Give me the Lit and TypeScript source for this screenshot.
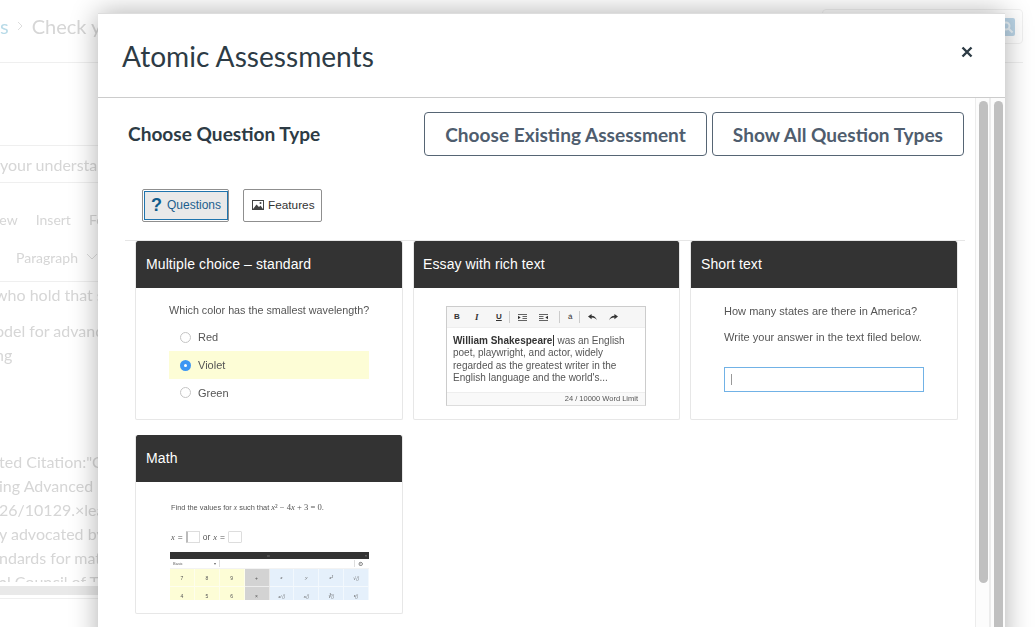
import { LitElement, html, css, svg } from "lit";
import { customElement } from "lit/decorators.js";

const sans = css`"Liberation Sans", Arial, sans-serif`;

const keys = [
  ["7", "y"], ["8", "y"], ["9", "y"], ["+", "g"], ["x", "b"], ["y", "b"], ["x²", "b"], ["√▯", "b"],
  ["4", "y"], ["5", "y"], ["6", "y"], ["×", "g"], ["x/▯", "b"], ["x▯", "b"], ["∛▯", "b"], ["ⁿ▯", "b"],
];

const icon = (d: string) => html`<svg class="tb-icon" viewBox="0 0 10 10" aria-hidden="true">${svg`<path d=${d}></path>`}</svg>`;

@customElement("app-root")
export class AppRoot extends LitElement {
  static styles = css`
    :host { display: block; width: 1036px; height: 627px; font-family: ${sans}; }
    * { box-sizing: border-box; }
    .page { position: relative; width: 1036px; height: 627px; overflow: hidden; background: #fff; }

    /* dimmed page behind the dialog */
    .bg { display: flex; flex-direction: column; width: 1023px; height: 627px; font-family: Lato, sans-serif; color: #d6d6d6; white-space: nowrap; filter: blur(0.4px); }
    .crumbs { flex: none; height: 63px; border-bottom: 1px solid #efefef; display: flex; justify-content: space-between; align-items: flex-start; padding-top: 8px; font-size: 20px; }
    .crumb-text { display: flex; align-items: center; gap: 8.5px; height: 36px; }
    .crumb-link { color: #b9dbe8; }
    .search { width: 201px; height: 35px; margin-top: 1px; border: 1px solid #f1f1f1; border-radius: 4px; display: flex; justify-content: flex-end; align-items: center; padding-right: 7px; }
    .search-btn { width: 16px; height: 18px; background: #bcd6e8; border-radius: 2px; display: flex; align-items: center; justify-content: center; }
    .search-btn svg { width: 14px; height: 14px; fill: none; stroke: #e9f2f7; stroke-width: 2; }
    .bg-col { width: 200px; font-size: 16px; }
    .instr { margin-top: 82px; height: 38px; border-top: 1px solid #efefef; border-bottom: 1px solid #efefef; display: flex; align-items: center; }
    .menu { margin: 18px 0 0 -4px; height: 36px; display: flex; align-items: center; gap: 18px; font-size: 14px; }
    .format { height: 45px; padding: 0 0 4px 16px; border-bottom: 1px solid #efefef; display: flex; align-items: center; gap: 8px; font-size: 14px; }
    .format svg { width: 12px; height: 8px; fill: none; stroke: #ddd; }
    .text { line-height: 24px; }
    .t1 { margin: 1px 0 0 -5px; }
    .t2 { margin: 12px 0 0 -5px; }
    .t3 { margin: 83px 0 0 -1px; height: 132px; overflow: hidden; }
    .hbar { margin-top: 4px; height: 9px; width: 100px; background: #e9e9e9; }
    .hline { margin-top: 3px; height: 1px; background: #efefef; }

    /* dialog */
    .modal { position: absolute; left: 98px; top: 13px; width: 907px; height: 640px; background: #fff; display: flex; flex-direction: column; box-shadow: 0 0 26px rgba(0,0,0,.32); border-top: 1px solid #ddd; }
    .m-head { flex: none; height: 84px; border-bottom: 1px solid #ccc; display: flex; align-items: center; justify-content: space-between; padding: 0 31px 0 24px; }
    h1 { margin: 1px 0 0; font: 400 28.1px Lato, sans-serif; color: #2d3b45; }
    .close { width: 14px; height: 14px; display: block; margin-bottom: 7px; stroke: #2d3b45; stroke-width: 2.4; }
    .m-body { flex: 1; min-height: 0; display: flex; }
    .content { width: 877px; padding: 14px 0 0 27px; }
    .title-row { display: flex; align-items: center; justify-content: space-between; padding-right: 11px; }
    h2 { margin: 0 0 2px 3px; font: 700 19.1px Lato, sans-serif; color: #2d3b45; }
    .btns { display: flex; gap: 5px; }
    .btn { height: 44px; padding: 0 20px; background: #fff; border: 1px solid #566574; border-radius: 4px; font: 700 19.08px Lato, sans-serif; color: #4f5d6e; white-space: nowrap; }
    .tabs { display: flex; gap: 14px; margin: 33px 0 0 17px; }
    .tab { height: 33px; padding: 1px; border: 1px solid #8f8f8f; border-radius: 2px; background: #fff; display: flex; font-size: 12px; color: #333; }
    .tab-in { display: flex; align-items: center; gap: 5px; border: 1px solid transparent; padding: 0 6px 2px; }
    .tab.on .tab-in { border-color: #1f74ad; background: #e9e9e9; color: #1c5f8e; }
    .tab.on { padding: 1px; width: 87px; }
    .tab.feat { width: 79px; font-size: 11.8px; }
    .tab.feat .tab-in { gap: 4px; }
    .q { font-size: 18px; font-weight: 700; color: #0f5c8c; line-height: 1; }
    .pic { width: 12px; height: 10px; }
    .rule { margin-top: 18px; height: 1px; background: #e6e6e6; width: 840px; }
    .cards { display: grid; grid-template-columns: 268px 267px 268px; column-gap: 10px; row-gap: 15px; margin-left: 10px; }
    .card { height: 179px; border: 1px solid #e7e7e7; border-top: 0; border-radius: 2px; overflow: hidden; background: #fff; }
    .c-head { height: 47px; background: #333; color: #fff; font-size: 14px; letter-spacing: .1px; display: flex; align-items: center; padding: 0 0 2px 10px; border-radius: 2px 2px 0 0; }
    .card:nth-child(2) .c-head { padding-left: 9px; }
    .c-body { color: #555; font-size: 11px; filter: blur(.3px); }

    .mc { padding: 16px 33px 0; }
    .mc-q { line-height: 13px; white-space: nowrap; font-size: 10.75px; }
    .opts { margin-top: 6px; display: flex; flex-direction: column; }
    .opt { height: 28px; display: flex; align-items: center; gap: 7px; padding-left: 11px; }
    .opt.sel { background: #fdfdd6; }
    .opt:last-child { height: 27px; }
    .radio { width: 11px; height: 11px; border-radius: 50%; border: 1px solid #c4c4c4; background: #fff; }
    .sel .radio { border: 0; background: #3d96f3; display: flex; align-items: center; justify-content: center; }
    .sel .radio::after { content: ""; width: 3px; height: 3px; border-radius: 50%; background: #fff; }

    .essay { padding: 18px 0 0 32px; }
    .editor { width: 200px; height: 100px; border: 1px solid #ccc; border-bottom-color: #ddd; display: flex; flex-direction: column; color: #555; }
    .tb { height: 21px; background: #f6f6f6; border-bottom: 1px solid #eee; display: flex; align-items: center; padding-left: 7px; }
    .tb-b { width: 21px; font-size: 8px; color: #333; font-weight: 700; line-height: 1; }
    .tb-b.i { font-style: italic; font-family: "Liberation Serif", serif; font-size: 9px; }
    .tb-b.u { text-decoration: underline; width: 16px; }
    .tb-b.a { width: 12px; font-weight: 400; }
    .tb-icon { width: 9px; height: 9px; fill: #333; margin-right: 12px; }
    .tb-sep { width: 1px; height: 12px; background: #ccc; margin: 0 8px 0 -1px; }
    .tb-sep.first { margin: 0 8px 0 -3px; }
    .e-text { flex: 1; padding: 6.5px 6px 0; font-size: 10px; line-height: 12.5px; white-space: nowrap; }
    .e-text b { color: #333; }
    .caret { display: inline-block; width: 1px; height: 11px; background: #333; margin: 0 3px 0 1px; vertical-align: -2px; }
    .e-foot { height: 13px; border-top: 1px solid #eee; background: #f9f9f9; font-size: 7.5px; text-align: right; padding-right: 7px; line-height: 12px; color: #555; }

    .st { padding: 17px 0 0 33px; line-height: 13px; letter-spacing: .03px; }
    .st p { margin: 0 0 13px; }
    .field { margin-top: 23px; width: 200px; height: 25px; border: 1px solid #71b2e6; display: flex; align-items: center; padding-left: 6px; }
    .field span { width: 1px; height: 11px; background: #999; }

    .math { padding: 20px 0 0 35px; color: #555; filter: blur(.45px); }
    .m-q { font-size: 7.4px; line-height: 10px; white-space: nowrap; }
    .m-q i, .m-a i { font-family: "Liberation Serif", serif; }
    .m-eq { font-family: "Liberation Serif", serif; font-size: 8.6px; }
    .m-a { margin-top: 17px; height: 13px; display: flex; align-items: center; gap: 3px; font-size: 8.5px; }
    .box { width: 14px; height: 12px; border: 1px solid #ddd; border-radius: 1px; }
    .box.cur { border-left: 2px solid #bbb; }
    .kbd { margin: 9px 0 0 -1px; width: 199px; height: 48px; overflow: hidden; }
    .k-top { height: 7px; background: #333; display: flex; align-items: center; justify-content: space-between; padding: 0 2px 0 97px; font-size: 4px; color: #999; line-height: 1; }
    .k-sel { height: 10px; display: flex; align-items: center; gap: 3px; font-size: 4px; color: #666; padding: 0 3px; background: #fff; border-bottom: 1px solid #f3f3f3; }
    .k-basic { width: 38px; }
    .k-div { width: 1px; height: 7px; background: #ddd; }
    .k-fill { flex: 1; }
    .k-gear { width: 8px; font-size: 6px; }
    .k-grid { display: grid; grid-template-columns: repeat(8, 1fr); grid-auto-rows: 18px; }
    .key { display: flex; align-items: center; justify-content: center; font-size: 5px; color: #555; border-right: 1px solid rgba(255,255,255,.5); border-bottom: 1px solid rgba(255,255,255,.6); }
    .key.y { background: #fdfdd6; }
    .key.g { background: #d3d3d3; }
    .key.b { background: #e5f0fb; font-family: "Liberation Serif", serif; font-style: italic; }

    .bars { flex: 1; display: flex; }
    .bar { width: 15px; border-left: 1px solid #ececec; border-right: 1px solid #ececec; background: #fcfcfc; padding: 3px 2px 0 3px; }
    .bar + .bar { width: 15px; border-right: 0; }
    .thumb { width: 9px; background: #c0c0c0; border-radius: 5px 5px 0 0; }
    .thumb.a { height: 482px; border-radius: 5px; }
    .thumb.b { height: 100%; }
  `;

  render() {
    return html`
      <div class="page">
        <div class="bg">
          <div class="crumbs">
            <div class="crumb-text">
              <span class="crumb-link">s</span>
              <svg width="6" height="10" viewBox="0 0 6 10" fill="none" stroke="#ddd"><path d="M1 1l4 4-4 4"></path></svg>
              <span>Check your understanding</span>
            </div>
            <div class="search">
              <div class="search-btn"><svg viewBox="0 0 14 14"><circle cx="6" cy="6" r="3.5"></circle><path d="M8.5 8.5l4 4"></path></svg></div>
            </div>
          </div>
          <div class="bg-col">
            <div class="instr">your understanding</div>
            <div class="menu"><span>iew</span><span>Insert</span><span>Format</span></div>
            <div class="format"><span>Paragraph</span><svg viewBox="0 0 12 8"><path d="M1 1l5 5 5-5"></path></svg></div>
            <div class="text t1">who hold that students</div>
            <div class="text t2">odel for advancing the<br />ng</div>
            <div class="text t3">ted Citation:"Common<br />ing Advanced Placement<br />26/10129.×learning<br />y advocated by the<br />ndards for mathematics<br />al Council of Teachers</div>
            <div class="hbar"></div>
            <div class="hline"></div>
          </div>
        </div>

        <div class="modal" role="dialog">
          <div class="m-head">
            <h1>Atomic Assessments</h1>
            <svg class="close" viewBox="0 0 14 14" aria-label="Close"><path d="M2.5 2.5l9 9M11.5 2.5l-9 9"></path></svg>
          </div>
          <div class="m-body">
            <div class="content">
              <div class="title-row">
                <h2>Choose Question Type</h2>
                <div class="btns">
                  <button class="btn">Choose Existing Assessment</button>
                  <button class="btn">Show All Question Types</button>
                </div>
              </div>
              <div class="tabs">
                <div class="tab on"><div class="tab-in"><span class="q">?</span>Questions</div></div>
                <div class="tab feat"><div class="tab-in">
                  <svg class="pic" viewBox="0 0 12 10"><rect x=".5" y=".5" width="11" height="9" fill="#fff" stroke="#444"></rect><path d="M1 9l3.500-4.500L7 7l1.500-1.500L11 9z" fill="#444"></path><circle cx="8.500" cy="3" r="1" fill="#444"></circle></svg>
                  Features
                </div></div>
              </div>
              <div class="rule"></div>
              <div class="cards">
                <div class="card">
                  <div class="c-head">Multiple choice – standard</div>
                  <div class="c-body mc">
                    <div class="mc-q">Which color has the smallest wavelength?</div>
                    <div class="opts">
                      <div class="opt"><span class="radio"></span>Red</div>
                      <div class="opt sel"><span class="radio"></span>Violet</div>
                      <div class="opt"><span class="radio"></span>Green</div>
                    </div>
                  </div>
                </div>
                <div class="card">
                  <div class="c-head">Essay with rich text</div>
                  <div class="c-body essay">
                    <div class="editor">
                      <div class="tb">
                        <span class="tb-b">B</span><span class="tb-b i">I</span><span class="tb-b u">U</span>
                        <span class="tb-sep first"></span>
                        ${icon("M0 1h10v1H0zM5 3.500h5v1H5zM5 5.500h5v1H5zM0 8h10v1H0zM0 3l3 2-3 2z")}
                        ${icon("M0 1h10v1H0zM0 3.500h5v1H0zM0 5.500h5v1H0zM0 8h10v1H0zM10 3L7 5l3 2z")}
                        <span class="tb-sep"></span>
                        <span class="tb-b a">á</span>
                        <span class="tb-sep"></span>
                        ${icon("M0 4l4-3v2c3 0 5 2 6 5-1.500-2-3-3-6-3v2z")}
                        ${icon("M10 4L6 1v2C3 3 1 5 0 8c1.500-2 3-3 6-3v2z")}
                      </div>
                      <div class="e-text"><b>William Shakespeare</b><span class="caret"></span>was an English<br />poet, playwright, and actor, widely<br />regarded as the greatest writer in the<br />English language and the world's...</div>
                      <div class="e-foot">24 / 10000 Word Limit</div>
                    </div>
                  </div>
                </div>
                <div class="card">
                  <div class="c-head">Short text</div>
                  <div class="c-body st">
                    <p>How many states are there in America?</p>
                    <p>Write your answer in the text filed below.</p>
                    <div class="field"><span></span></div>
                  </div>
                </div>
                <div class="card">
                  <div class="c-head">Math</div>
                  <div class="c-body math">
                    <div class="m-q">Find the values for <i>x</i> such that <span class="m-eq"><i>x</i>² − 4<i>x</i> + 3 = 0.</span></div>
                    <div class="m-a"><i>x</i> = <span class="box cur"></span> or <i>x</i> = <span class="box"></span></div>
                    <div class="kbd">
                      <div class="k-top"><span>═</span><span>×</span></div>
                      <div class="k-sel"><span class="k-basic">Basic</span><span>▾</span><span class="k-div"></span><span class="k-fill"></span><span class="k-div"></span><span class="k-gear">⚙</span></div>
                      <div class="k-grid">${keys.map(([k, c]) => html`<div class="key ${c}">${k}</div>`)}</div>
                    </div>
                  </div>
                </div>
              </div>
            </div>
            <div class="bars">
              <div class="bar"><div class="thumb a"></div></div>
              <div class="bar"><div class="thumb b"></div></div>
            </div>
          </div>
        </div>
      </div>
    `;
  }
}
